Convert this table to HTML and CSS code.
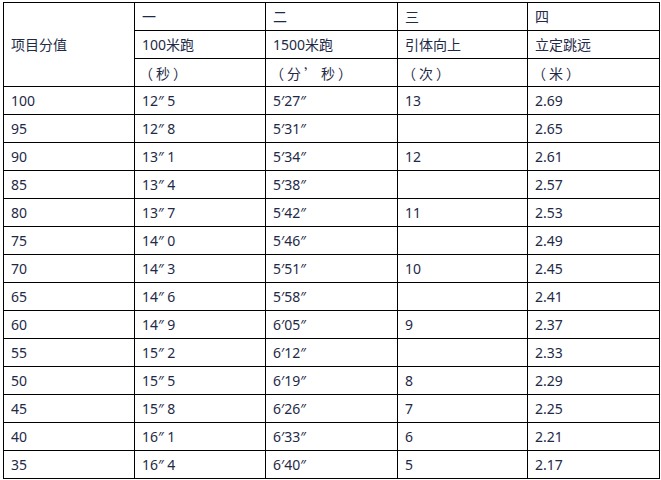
FILE: index.html
```html
<!DOCTYPE html>
<html lang="zh-CN">
<head>
<meta charset="utf-8">
<link rel="stylesheet" href="styles.css">
</head>
<body>
<table class="score">
<colgroup><col class="c1"><col class="c2"><col class="c3"><col class="c4"><col class="c5"></colgroup>
<tr><td rowspan="3">项目分值</td><td>一</td><td>二</td><td>三</td><td>四</td></tr>
<tr><td>100米跑</td><td>1500米跑</td><td>引体向上</td><td>立定跳远</td></tr>
<tr><td class="unit">（秒）</td><td class="unit">（分’秒）</td><td class="unit">（次）</td><td class="unit">（米）</td></tr>
<tr><td>100</td><td>12″ 5</td><td>5′27″</td><td>13</td><td>2.69</td></tr>
<tr><td>95</td><td>12″ 8</td><td>5′31″</td><td></td><td>2.65</td></tr>
<tr><td>90</td><td>13″ 1</td><td>5′34″</td><td>12</td><td>2.61</td></tr>
<tr><td>85</td><td>13″ 4</td><td>5′38″</td><td></td><td>2.57</td></tr>
<tr><td>80</td><td>13″ 7</td><td>5′42″</td><td>11</td><td>2.53</td></tr>
<tr><td>75</td><td>14″ 0</td><td>5′46″</td><td></td><td>2.49</td></tr>
<tr><td>70</td><td>14″ 3</td><td>5′51″</td><td>10</td><td>2.45</td></tr>
<tr><td>65</td><td>14″ 6</td><td>5′58″</td><td></td><td>2.41</td></tr>
<tr><td>60</td><td>14″ 9</td><td>6′05″</td><td>9</td><td>2.37</td></tr>
<tr><td>55</td><td>15″ 2</td><td>6′12″</td><td></td><td>2.33</td></tr>
<tr><td>50</td><td>15″ 5</td><td>6′19″</td><td>8</td><td>2.29</td></tr>
<tr><td>45</td><td>15″ 8</td><td>6′26″</td><td>7</td><td>2.25</td></tr>
<tr><td>40</td><td>16″ 1</td><td>6′33″</td><td>6</td><td>2.21</td></tr>
<tr><td>35</td><td>16″ 4</td><td>6′40″</td><td>5</td><td>2.17</td></tr>
</table>
</body>
</html>
```
FILE: styles.css
```css
html, body {
  margin: 0;
  padding: 0;
  background: #fff;
}
body {
  padding: 2px 0 0 3px;
}
.score {
  border-collapse: collapse;
  table-layout: fixed;
  width: 656px;
  font-family: "Noto Sans", "Noto Sans CJK SC", sans-serif;
  font-size: 14px;
  color: #1e2a47;
}
.c1 { width: 131px; }
.c2 { width: 131px; }
.c3 { width: 132px; }
.c4 { width: 130px; }
.c5 { width: 132px; }
.score td {
  border: 1px solid #000;
  height: 28px;
  padding: 1px 0 0 7px;
  box-sizing: border-box;
  vertical-align: middle;
  white-space: nowrap;
  line-height: 20px;
}
.score td.unit {
  font-family: "Noto Sans CJK SC", sans-serif;
  letter-spacing: 3px;
  padding-left: 4px;
}
```
